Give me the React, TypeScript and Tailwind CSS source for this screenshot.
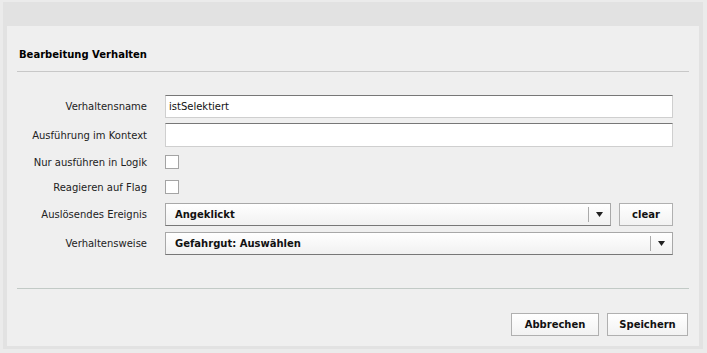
const font = { fontFamily: '"DejaVu Sans", Verdana, sans-serif' };

const Label = ({ children }: { children: React.ReactNode }) => (
    <div className="w-[131px] shrink-0 text-right text-[10px] text-[#222] pr-[1px]">{children}</div>
);

const TextInput = ({ value }: { value?: string }) => (
    <div className="ml-[17px] w-[508px] h-full bg-white border border-[#cfcfcf] border-t-[#777] flex items-center px-[3px] text-[10px] text-[#111]">
        {value}
    </div>
);

const Checkbox = () => (
    <div className="ml-[17px] w-[14px] h-[14px] bg-white border border-[#a4a4a4]" />
);

const Select = ({ value, width }: { value: string; width: string }) => (
    <div
        className={`ml-[17px] ${width} h-full border border-[#a8a8a8] border-b-[#777] bg-gradient-to-b from-white to-[#f1f1f1] flex items-center`}
    >
        <span className="flex-1 pl-[9px] text-[10px] font-bold text-[#111]">{value}</span>
        <div className="w-px h-[15px] bg-[#aaa]" />
        <div className="w-[21px] flex justify-center">
            <svg width="7" height="5" viewBox="0 0 7 5">
                <path d="M0 0 H7 L3.5 5 Z" fill="#222" />
            </svg>
        </div>
    </div>
);

const Button = ({ children, className }: { children: React.ReactNode; className: string }) => (
    <button
        className={`${className} h-[23px] border border-[#b0b0b0] bg-gradient-to-b from-white to-[#f2f2f2] text-[10px] font-bold text-[#111]`}
    >
        {children}
    </button>
);

export default function App() {
    return (
        <div className="w-[707px] h-[353px] bg-[#ebebeb] pt-[2px] pl-[3px]" style={font}>
            <div className="w-[700px] h-[347px] bg-[#e2e2e2] pt-[24px] px-[4px] pb-[3px]">
                <div className="h-full bg-[#efefef] px-[10px]">
                    <div className="pt-[22px] pl-[2px] text-[10px] font-bold text-black leading-[14px]">
                        Bearbeitung Verhalten
                    </div>
                    <div className="mt-[9px] h-px bg-[#c8c8c8]" />

                    <div className="mt-[23px] flex items-center h-[23px]">
                        <Label>Verhaltensname</Label>
                        <TextInput value="istSelektiert" />
                    </div>
                    <div className="mt-[5px] flex items-center h-[24px]">
                        <Label>Ausführung im Kontext</Label>
                        <TextInput />
                    </div>
                    <div className="mt-[8px] flex items-center h-[14px]">
                        <Label>Nur ausführen in Logik</Label>
                        <Checkbox />
                    </div>
                    <div className="mt-[11px] flex items-center h-[14px]">
                        <Label>Reagieren auf Flag</Label>
                        <Checkbox />
                    </div>
                    <div className="mt-[9px] flex items-center h-[23px]">
                        <Label>Auslösendes Ereignis</Label>
                        <Select value="Angeklickt" width="w-[446px]" />
                        <Button className="ml-[8px] w-[54px]">clear</Button>
                    </div>
                    <div className="mt-[6px] flex items-center h-[23px]">
                        <Label>Verhaltensweise</Label>
                        <Select value="Gefahrgut: Auswählen" width="w-[508px]" />
                    </div>

                    <div className="mt-[33px] h-px bg-[#c2cac6]" />

                    <div className="mt-[24px] flex justify-end gap-[8px] pr-[1px]">
                        <Button className="w-[88px]">Abbrechen</Button>
                        <Button className="w-[81px]">Speichern</Button>
                    </div>
                </div>
            </div>
        </div>
    );
}
